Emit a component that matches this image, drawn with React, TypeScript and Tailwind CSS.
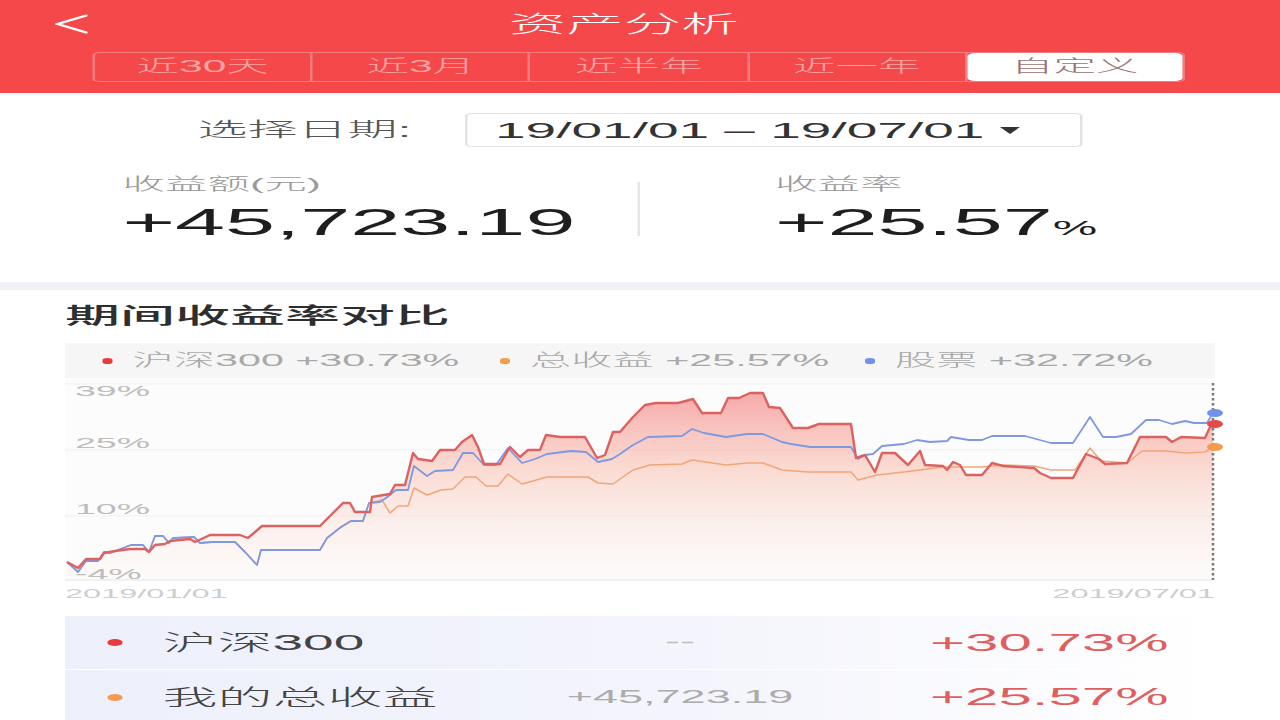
import React from "react";

type Pt = [number, number];

const red: Pt[] = [
  [67, 562], [78, 568], [86, 559], [100, 559], [104, 553], [115, 551], [130, 549], [145, 549], [149, 552], [155, 545],
  [165, 544], [170, 541], [190, 539], [195, 542], [210, 535], [240, 535], [248, 538], [262, 526], [320, 526], [330, 516],
  [343, 503], [350, 503], [355, 512], [370, 512], [372, 497], [390, 494], [395, 485], [405, 485], [413, 453], [418, 459],
  [432, 461], [440, 450], [455, 450], [462, 442], [472, 435], [478, 447], [484, 464], [500, 464], [510, 447], [520, 457],
  [528, 450], [540, 450], [546, 435], [560, 437], [585, 437], [597, 458], [605, 455], [613, 432], [620, 432], [633, 417],
  [645, 405], [656, 403], [678, 403], [693, 399], [702, 413], [721, 413], [728, 398], [739, 398], [750, 393], [763, 393],
  [769, 407], [780, 408], [793, 428], [808, 428], [819, 424], [851, 424], [856, 458], [865, 455], [875, 472], [882, 453],
  [895, 453], [908, 465], [920, 451], [925, 465], [943, 466], [947, 470], [953, 462], [960, 465], [966, 475], [982, 475],
  [992, 463], [1003, 466], [1034, 468], [1040, 473], [1051, 478], [1073, 478], [1086, 454], [1099, 459], [1105, 464],
  [1127, 463], [1140, 437], [1166, 437], [1172, 442], [1181, 437], [1205, 438], [1211, 425], [1213, 423],
];

const blueHead: Pt[] = [
  [67, 562], [78, 572], [86, 561], [98, 561], [104, 552], [110, 553], [131, 545], [143, 545], [149, 552], [155, 536],
  [163, 536], [169, 543], [173, 538], [194, 537], [200, 543], [212, 542], [235, 542], [245, 552], [257, 565], [261, 550],
  [320, 550], [327, 538], [341, 527], [351, 521], [363, 521], [369, 503],
];

const blue: Pt[] = [
  ...blueHead,
  [380, 502], [386, 498], [396, 490], [408, 490], [414, 466], [427, 476], [435, 471], [453, 470], [463, 453], [473, 453],
  [484, 465], [496, 465], [508, 448], [522, 463], [535, 459], [547, 454], [571, 451], [586, 452], [598, 462], [612, 459],
  [620, 454], [633, 445], [648, 437], [682, 436], [692, 429], [704, 433], [726, 437], [747, 434], [763, 434], [782, 442],
  [791, 444], [810, 447], [851, 447], [858, 459], [865, 455], [873, 454], [882, 446], [904, 444], [917, 440], [930, 442],
  [947, 441], [951, 437], [969, 440], [982, 440], [992, 436], [1025, 436], [1051, 443], [1073, 443], [1090, 417],
  [1103, 437], [1116, 437], [1131, 434], [1146, 420], [1159, 420], [1172, 424], [1185, 421], [1194, 423], [1207, 423],
  [1213, 413],
];

const orange: Pt[] = [
  ...blueHead,
  [382, 500], [390, 513], [398, 506], [408, 506], [414, 488], [427, 495], [441, 490], [453, 489], [465, 477], [476, 477],
  [486, 486], [498, 486], [508, 474], [522, 484], [547, 477], [588, 477], [598, 483], [613, 484], [633, 470], [650, 465],
  [682, 464], [692, 460], [726, 465], [747, 463], [763, 463], [782, 470], [808, 472], [851, 472], [858, 480], [877, 475],
  [904, 472], [943, 467], [960, 467], [982, 467], [1003, 465], [1034, 466], [1051, 470], [1075, 470], [1090, 448],
  [1101, 461], [1127, 463], [1142, 451], [1166, 451], [1185, 453], [1205, 452], [1213, 447],
];

const pts = (p: Pt[]) => p.map(([x, y]) => `${x},${y}`).join(" ");

const tabs = ["近30天", "近3月", "近半年", "近一年", "自定义"];

// chart drawn in screenshot coordinates, squeezed back by the page's horizontal stretch
const Chart = () => (
  <svg className="block w-[460px] h-[202px] overflow-visible" viewBox="65 378 1150 202" preserveAspectRatio="none">
    <defs>
      <linearGradient id="redFill" x1="0" y1="390" x2="0" y2="580" gradientUnits="userSpaceOnUse">
        <stop offset="0" stopColor="#f26f6f" stopOpacity="0.6" />
        <stop offset="0.45" stopColor="#f8a58e" stopOpacity="0.35" />
        <stop offset="1" stopColor="#fff3ee" stopOpacity="0.15" />
      </linearGradient>
    </defs>
    <line x1="65" y1="384" x2="1213" y2="384" stroke="#f1f1f1" strokeWidth="1" />
    <line x1="65" y1="450" x2="1213" y2="450" stroke="#f1f1f1" strokeWidth="1" />
    <line x1="65" y1="516" x2="1213" y2="516" stroke="#f1f1f1" strokeWidth="1" />
    <line x1="65" y1="580" x2="1213" y2="580" stroke="#ececec" strokeWidth="1.5" />
    <polygon points={`${pts(red)} 1213,580 67,580`} fill="url(#redFill)" />
    <polyline points={pts(orange)} fill="none" stroke="#f2a577" strokeWidth="1.5" strokeLinejoin="round" />
    <polyline points={pts(blue)} fill="none" stroke="#7f98e2" strokeWidth="1.8" strokeLinejoin="round" />
    <polyline points={pts(red)} fill="none" stroke="#dc6262" strokeWidth="2.4" strokeLinejoin="round" />
    <line x1="1213" y1="383" x2="1213" y2="580" stroke="#7a7a7a" strokeWidth="2.5" strokeDasharray="2.5 2.5" />
    <ellipse cx="1215" cy="413" rx="8" ry="4" fill="#6f93ea" />
    <ellipse cx="1215" cy="424" rx="8" ry="4" fill="#e84848" />
    <ellipse cx="1215" cy="447" rx="8" ry="4" fill="#f39b4f" />
  </svg>
);

export default function App() {
  return (
    <div className="w-[1280px] h-[720px] overflow-hidden bg-white">
      <div className="w-[512px] origin-top-left scale-x-[2.5] font-light font-['Liberation_Sans','Noto_Sans_CJK_SC',sans-serif]">
        {/* header */}
        <div className="h-[93px] bg-[#f5484a]">
          <div className="h-[48px] flex items-center">
            <div className="w-[80px] pl-[22px] flex items-center">
              <svg width="13" height="20" viewBox="0 0 13 20" fill="none">
                <polyline points="12.5,1.5 1,10 12.5,18.5" stroke="white" strokeWidth="2" strokeLinejoin="round" strokeLinecap="round" />
              </svg>
            </div>
            <div className="flex-1 text-center text-white text-[23px] leading-[30px] mr-[93px]">资产分析</div>
          </div>
          <div className="ml-[37px] mt-[4px] w-[437px] h-[30px] flex border border-[#f47c7c] rounded-[3px]">
            {tabs.map((t, i) => (
              <div
                key={t}
                className={
                  i === 4
                    ? "flex-1 flex items-center justify-center bg-white rounded-[3px] text-[#9a7272] text-[17px]"
                    : "flex-1 flex items-center justify-center border-r border-[#f47c7c] text-[#f9a4a4] text-[17px]"
                }
              >
                {t}
              </div>
            ))}
          </div>
        </div>

        {/* summary */}
        <div className="h-[189px]">
          <div className="flex items-center pl-[79px] pt-[20px]">
            <span className="w-[107px] text-[20px] text-[#555]">选择日期:</span>
            <div className="w-[247px] h-[34px] border border-[#e2e2e2] rounded-[3px] flex items-center justify-between pl-[11px] pr-[24px]">
              <span className="text-[22px] text-[#333]">19/01/01 – 19/07/01</span>
              <span className="w-0 h-0 border-l-[4.5px] border-r-[4.5px] border-t-[7px] border-l-transparent border-r-transparent border-t-[#333]" />
            </div>
          </div>
          <div className="flex mt-[26px]">
            <div className="w-[255px] pl-[49px]">
              <div className="text-[17px] leading-[24px] text-[#9a9a9a]">收益额(元)</div>
              <div className="mt-[6px] text-[36px] leading-[40px] text-[#1e1e1e]">+45,723.19</div>
            </div>
            <div className="w-px h-[54px] mt-[9px] bg-[#e6e6e6]" />
            <div className="pl-[54px]">
              <div className="text-[17px] leading-[24px] text-[#9a9a9a]">收益率</div>
              <div className="mt-[6px] text-[36px] leading-[40px] text-[#1e1e1e]">
                +25.57<span className="text-[20px]">%</span>
              </div>
            </div>
          </div>
        </div>

        <div className="h-[8px] bg-[#f2f2f6]" />

        {/* comparison */}
        <div className="pt-[11px]">
          <div className="pl-[26px] text-[22px] leading-[30px] font-medium text-[#2e2e2e]">期间收益率对比</div>
          <div className="ml-[26px] mt-[12px] w-[460px]">
            <div className="h-[35px] bg-[#f6f6f6] flex items-center text-[16.5px] text-[#a9a9a9]">
              <div className="w-[174px] pl-[15px] flex items-center">
                <span className="w-[4px] h-[6px] rounded-full bg-[#e83a3a] mr-[8px]" />
                沪深300 +30.73%
              </div>
              <div className="w-[146px] flex items-center">
                <span className="w-[4px] h-[6px] rounded-full bg-[#f39b4f] mr-[8px]" />
                总收益 +25.57%
              </div>
              <div className="flex items-center">
                <span className="w-[4px] h-[6px] rounded-full bg-[#6f93ea] mr-[8px]" />
                股票 +32.72%
              </div>
            </div>
            <div className="relative h-[202px] bg-[#fcfcfc]">
              <Chart />
              <span className="absolute left-[4px] top-[5px] text-[15px] leading-[15px] text-[#bdbdbd]">39%</span>
              <span className="absolute left-[4px] top-[57px] text-[15px] leading-[15px] text-[#bdbdbd]">25%</span>
              <span className="absolute left-[4px] top-[123px] text-[15px] leading-[15px] text-[#bdbdbd]">10%</span>
              <span className="absolute left-[4px] top-[188px] text-[15px] leading-[15px] text-[#bdbdbd]">-4%</span>
            </div>
            <div className="h-[28px] flex items-center justify-between text-[13px] text-[#cdcdcd]">
              <span>2019/01/01</span>
              <span>2019/07/01</span>
            </div>
          </div>

          <div className="ml-[26px] mt-[8px] w-[460px] bg-linear-to-r from-[#edf0fb] via-[#f3f4fc] to-white">
            <div className="h-[54px] flex items-center border-b border-white">
              <div className="w-[186px] pl-[17px] flex items-center">
                <span className="w-[6px] h-[7px] rounded-full bg-[#e83a3a]" />
                <span className="ml-[16px] text-[22px] text-[#444]">沪深300</span>
              </div>
              <div className="w-[120px] text-center text-[18px] text-[#bdbdbd]">--</div>
              <div className="pl-[40px] text-[24px] text-[#df5f5f]">+30.73%</div>
            </div>
            <div className="h-[54px] flex items-center">
              <div className="w-[186px] pl-[17px] flex items-center">
                <span className="w-[6px] h-[7px] rounded-full bg-[#f39b4f]" />
                <span className="ml-[16px] text-[22px] text-[#444]">我的总收益</span>
              </div>
              <div className="w-[120px] text-center text-[18px] text-[#acacac]">+45,723.19</div>
              <div className="pl-[40px] text-[24px] text-[#df5f5f]">+25.57%</div>
            </div>
          </div>
        </div>
      </div>
    </div>
  );
}
